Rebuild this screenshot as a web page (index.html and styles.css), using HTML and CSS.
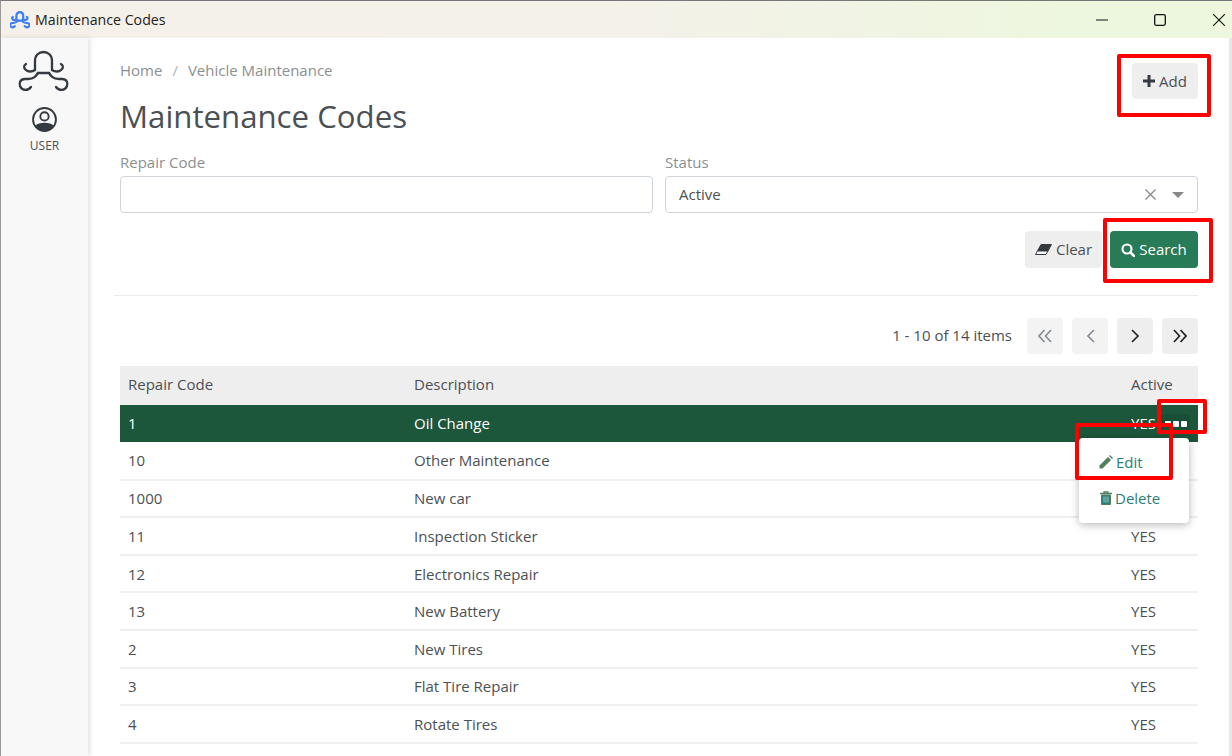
FILE: index.html
```html
<!DOCTYPE html>
<html lang="en">
<head>
<meta charset="utf-8">
<title>Maintenance Codes</title>
<link rel="stylesheet" href="styles.css">
</head>
<body>
<div class="window">
  <header class="titlebar">
    <svg class="app-logo" viewBox="9 3 50 45" width="20" height="18"><g fill="none" stroke="#3b7ff5" stroke-width="5.500" stroke-linecap="round"><path d="M25 24V15C25 9 29 6 33.500 6S42 9 42 15V24"/><path d="M25 24C22 26 18 26 16 24C13 22 14 19 16 18"/><path d="M42 24C45 26 49 26 51 24C54 22 53 19 51 18"/><path d="M28 27H39"/><path d="M28 27C26 30 24 33 18 33H15C10 33 9 37 10 40C12 45 18 45 21 41"/><path d="M39 27C41 30 43 33 49 33H52C57 33 58 37 57 40C55 45 49 45 46 41"/></g></svg>
    <span class="app-title">Maintenance Codes</span>
    <div class="win-controls">
      <svg class="win-btn" viewBox="0 0 12 12" width="12" height="12"><path d="M0 6h12" stroke="#111" stroke-width="1"/></svg>
      <svg class="win-btn" viewBox="0 0 12 12" width="12" height="12"><rect x=".7" y=".7" width="10.600" height="10.600" rx="1.500" fill="none" stroke="#111" stroke-width="1.300"/></svg>
      <svg class="win-btn win-close" viewBox="0 0 12 12" width="12" height="12"><path d="M0 0l12 12M12 0L0 12" stroke="#111" stroke-width="1.100"/></svg>
    </div>
  </header>
  <div class="body-row">
    <aside class="sidebar">
      <svg class="brand" viewBox="0 0 70 55" width="70" height="55"><g fill="none" stroke="#343a40" stroke-width="2.300" stroke-linecap="round"><path d="M25 24V15C25 9 29 6 33.500 6S42 9 42 15V24"/><path d="M25 24C22 26 18 26 16 24C13 22 14 19 16 18"/><path d="M42 24C45 26 49 26 51 24C54 22 53 19 51 18"/><path d="M28 27H39"/><path d="M28 27C26 30 24 33 18 33H15C10 33 9 37 10 40C12 45 18 45 21 41"/><path d="M39 27C41 30 43 33 49 33H52C57 33 58 37 57 40C55 45 49 45 46 41"/></g></svg>
      <svg class="user-icon" viewBox="0 0 24 24" width="25" height="25"><defs><clipPath id="uc"><circle cx="12" cy="12" r="11"/></clipPath></defs><circle cx="12" cy="12" r="11" fill="none" stroke="#343a40" stroke-width="1.800"/><circle cx="12" cy="9" r="4" fill="none" stroke="#343a40" stroke-width="1.800"/><path clip-path="url(#uc)" d="M2 24v-5c2-3 5.500-4 10-4s8 1 10 4v5z" fill="#343a40"/></svg>
      <span class="user-label">USER</span>
    </aside>
    <main class="content">
      <div class="top">
        <div class="heading">
          <nav class="crumbs"><span>Home</span><span class="sep">/</span><span>Vehicle Maintenance</span></nav>
          <h1>Maintenance Codes</h1>
        </div>
        <button class="btn btn-add"><svg viewBox="0 0 12 12" width="12" height="12"><path d="M4.500 0h3v4.500H12v3H7.500V12h-3V7.500H0v-3h4.500z" fill="#343a40"/></svg>Add</button>
      </div>
      <form class="filters">
        <label class="field"><span class="field-label">Repair Code</span><span class="input"></span></label>
        <label class="field"><span class="field-label">Status</span>
          <span class="input select"><span class="select-value">Active</span>
            <svg viewBox="0 0 11 11" width="11" height="11"><path d="M.5.5l10 10M10.500.5l-10 10" stroke="#888" stroke-width="1.300"/></svg>
            <span class="caret"></span></span></label>
      </form>
      <div class="actions">
        <button class="btn btn-clear"><svg viewBox="0 0 17 11" width="17" height="11"><path d="M6 .5H16.500L11 10.500H.5z" fill="#fff" stroke="#343a40"/><path d="M6 .5H16.500L12.700 7.500H2.200z" fill="#343a40"/></svg><span>Clear</span></button>
        <button class="btn btn-search"><svg viewBox="0 0 14 14" width="14" height="14"><circle cx="6" cy="6" r="4.500" fill="none" stroke="#fff" stroke-width="2.200"/><path d="M9.500 9.500L13 13" stroke="#fff" stroke-width="2.600" stroke-linecap="round"/></svg><span>Search</span></button>
      </div>
      <hr class="divider">
      <div class="pager">
        <span class="pager-text">1 - 10 of 14 items</span>
        <button class="page off"><svg viewBox="0 0 14 14" width="14" height="14"><path d="M6.500 1L1 7l5.500 6M13 1L7.500 7l5.500 6" fill="none" stroke="#868e96" stroke-width="1.700"/></svg></button>
        <button class="page off"><svg viewBox="0 0 9 14" width="9" height="14"><path d="M8 1L2 7l6 6" fill="none" stroke="#868e96" stroke-width="1.700"/></svg></button>
        <button class="page"><svg viewBox="0 0 9 14" width="9" height="14"><path d="M1 1l6 6-6 6" fill="none" stroke="#212529" stroke-width="1.700"/></svg></button>
        <button class="page"><svg viewBox="0 0 14 14" width="14" height="14"><path d="M1 1l5.500 6L1 13M7.500 1L13 7l-5.500 6" fill="none" stroke="#212529" stroke-width="1.700"/></svg></button>
      </div>
      <table class="grid">
        <thead><tr><th class="c1">Repair Code</th><th>Description</th><th class="c3">Active</th></tr></thead>
        <tbody>
          <tr class="selected"><td>1</td><td>Oil Change</td><td class="c3">YES<span class="row-menu"><i></i><i></i><i></i></span></td></tr>
          <tr><td>10</td><td>Other Maintenance</td><td class="c3">YES</td></tr>
          <tr><td>1000</td><td>New car</td><td class="c3">YES</td></tr>
          <tr><td>11</td><td>Inspection Sticker</td><td class="c3">YES</td></tr>
          <tr><td>12</td><td>Electronics Repair</td><td class="c3">YES</td></tr>
          <tr><td>13</td><td>New Battery</td><td class="c3">YES</td></tr>
          <tr><td>2</td><td>New Tires</td><td class="c3">YES</td></tr>
          <tr><td>3</td><td>Flat Tire Repair</td><td class="c3">YES</td></tr>
          <tr><td>4</td><td>Rotate Tires</td><td class="c3">YES</td></tr>
        </tbody>
      </table>
    </main>
  </div>
  <div class="menu">
    <div class="menu-item"><svg viewBox="0 0 14 14" width="14" height="14"><path d="M.5 10.500L9 2l3 3-8.500 8.500H.5z" fill="#4f7f5c"/><path d="M10 1l1-1 3 3-1 1z" fill="#4f7f5c"/></svg>Edit</div>
    <div class="menu-item"><svg class="trash" viewBox="0 0 12 14" width="12" height="14"><path d="M4 2V.8h4V2M0 2.500h12" fill="none" stroke="#4f7f5c" stroke-width="1.300"/><path d="M1.500 4h9v9.500h-9z" fill="#2a7f7a" stroke="#4f7f5c"/><path d="M4 5.500v6M6 5.500v6M8 5.500v6" stroke="#cfe3de" stroke-width=".7"/></svg>Delete</div>
  </div>
  <div class="mark mark-add"></div>
  <div class="mark mark-search"></div>
  <div class="mark mark-dots"></div>
  <div class="mark mark-edit"></div>
</div>
</body>
</html>
```

FILE: styles.css
```css
* { box-sizing: border-box; }
html, body { margin: 0; height: 100%; overflow: hidden; }
body { font-family: "Open Sans", sans-serif; font-size: 15px; color: #4b5055; background: #fff; }
.window { position: relative; width: 1232px; height: 756px; overflow: hidden; border-top: 1px solid #777; border-left: 1px solid #999; display: flex; flex-direction: column; }
.titlebar { height: 37px; flex: none; display: flex; align-items: center; padding-left: 9px; background: linear-gradient(90deg, #f5f1ea 0%, #f4f1e9 50%, #edf7de 90%); }
.app-title { margin-left: 5px; font-size: 14.200px; color: #222; }
.win-controls { margin-left: auto; display: flex; gap: 46px; padding-right: 7px; align-items: center; }
.win-close { margin-left: 1px; }
.body-row { flex: 1; display: flex; min-height: 0; }
.sidebar { width: 87px; flex: none; background: #f8f8f8; box-shadow: 2px 0 5px rgba(0,0,0,.12); display: flex; flex-direction: column; align-items: center; padding-top: 8px; position: relative; }
.brand { display: block; margin-left: 1px; }
.user-icon { margin-top: 6px; }
.user-label { font-size: 12px; margin-top: 5px; color: #4b5055; }
.content { flex: 1; padding: 0 31px 0 32px; min-width: 0; border-right: 3px solid #e8e8e8; }
.top { display: flex; justify-content: space-between; align-items: flex-start; }
.crumbs { margin-top: 22px; color: #8c8f92; line-height: 20px; display: flex; gap: 10px; }
.sep { color: #adb5bd; }
h1 { margin: 15px 0 0; font-size: 31.200px; line-height: 42px; font-weight: 400; color: #4b5055; }
.btn { font-family: inherit; font-size: 15px; border: 0; border-radius: 4px; display: inline-flex; align-items: center; justify-content: center; gap: 4px; padding: 0; background: #eee; color: #4b5055; }
.btn-add { width: 66px; height: 36px; margin-top: 25px; }
.filters { display: grid; grid-template-columns: 533px 533px; column-gap: 12px; margin-top: 15px; }
.field { display: block; }
.field-label { display: block; color: #8c8f92; line-height: 20px; margin-bottom: 4px; }
.input { display: flex; height: 37px; border: 1px solid #ced4da; border-radius: 4px; align-items: center; padding: 0 13px; background: #fff; }
.select-value { flex: 1; padding-bottom: 1px; }
.caret { margin-left: 16px; border: 6.500px solid transparent; border-top: 6px solid #888; border-bottom: 0; }
.actions { display: flex; justify-content: flex-end; gap: 8px; margin-top: 18px; }
.btn-clear { width: 77px; height: 37px; }
.btn-clear span, .btn-search span { padding-bottom: 1px; }
.btn-search { width: 88px; height: 37px; background: #277b56; color: #fff; }
.divider { border: 0; border-top: 1px solid #e9ecef; margin: 27px 0 0 -6px; }
.pager { display: flex; justify-content: flex-end; align-items: center; gap: 9px; margin-top: 22px; }
.pager-text { margin-right: 6px; color: #4b5055; padding-bottom: 2px; }
.page { width: 36px; height: 36px; border: 0; border-radius: 4px; background: #eee; display: inline-flex; align-items: center; justify-content: center; padding: 0; }
.page.off { background: #f3f3f3; }
.grid { width: 100%; border-collapse: collapse; margin-top: 12px; table-layout: fixed; }
.grid th { height: 39px; background: #eee; font-weight: 400; text-align: left; padding: 0 8px 3px; }
.c1 { width: 294px; }
.c3 { width: 75px; }
.grid th:nth-child(2), .grid td:nth-child(2) { padding-left: 0; }
.grid th.c1, .grid td:first-child { padding-left: 8px; }
.grid th.c3, .grid td.c3 { padding-left: 8px; }
.grid td { height: 37.600px; padding: 0 8px; border-bottom: 2px solid #f0f0f0; white-space: nowrap; }
.grid td.c3 { position: relative; }
.selected td { background: #1c563b; color: #fff; font-weight: 500; border-bottom: 0; height: 37px; padding-bottom: 2px; }
.selected td.c3 { font-weight: 400; }
.row-menu { position: absolute; right: 8px; top: 9px; width: 30px; height: 20px; padding-left: 1px; border-radius: 4px; background: #1a4f37; display: flex; align-items: center; justify-content: center; gap: 2px; }
.row-menu i { width: 6px; height: 6px; background: #fff; border-radius: 1px; }
.menu { position: absolute; left: 1078px; top: 437px; width: 110px; height: 85px; background: #fff; border-radius: 4px; box-shadow: 0 2px 8px rgba(0,0,0,.28); color: #2a8078; padding-top: 6px; }
.menu-item { height: 36px; display: flex; align-items: center; gap: 3px; padding-left: 20px; }
.trash { margin-left: 1px; }
.mark { position: absolute; border: 4px solid #f00; border-radius: 2px; }
.mark-add { left: 1116px; top: 53px; width: 94px; height: 63px; }
.mark-search { left: 1102px; top: 217px; width: 110px; height: 65px; }
.mark-dots { left: 1156px; top: 398px; width: 50px; height: 35px; }
.mark-edit { left: 1074px; top: 422px; width: 98px; height: 57px; }
```
